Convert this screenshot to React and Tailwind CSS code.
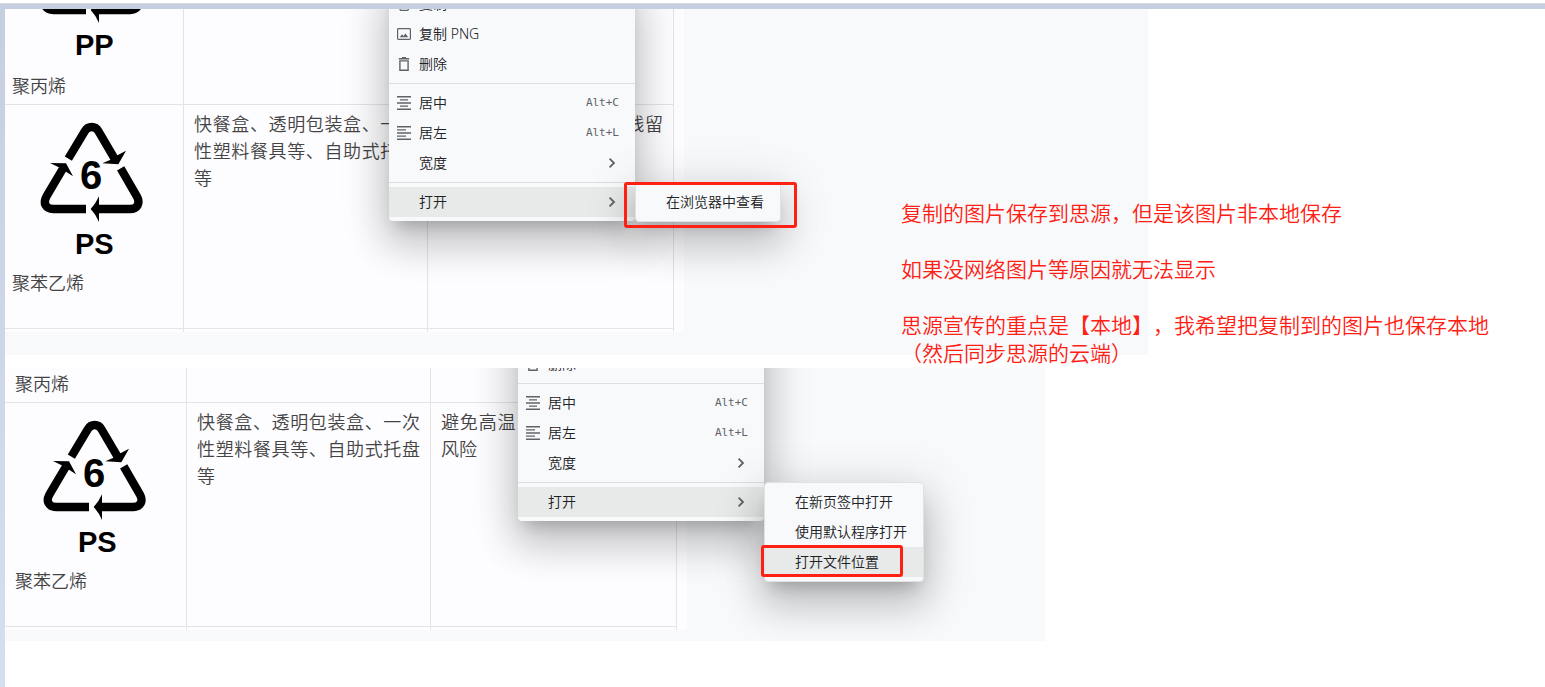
import React from 'react';
import { clsx } from 'clsx';

const icons = {
    image: (
        <svg viewBox="0 0 14 14" className="w-3.5 h-3.5" fill="none" stroke="currentColor">
            <rect x="0.6" y="1.6" width="12.8" height="10.8" rx="0.8" strokeWidth="1.2" />
            <path d="M2.8 10.2 5 7.2l1.5 1.9 2-2.7 2.7 3.8z" fill="currentColor" stroke="none" />
        </svg>
    ),
    trash: (
        <svg viewBox="0 0 14 14" className="w-3.5 h-3.5" fill="none" stroke="currentColor" strokeWidth="1.4">
            <path d="M1.8 1.7h10.4M5 .7h4M2.9 3.9h8.2v9.4H2.9z" />
        </svg>
    ),
    copy: (
        <svg viewBox="0 0 14 14" className="w-3.5 h-3.5" fill="none" stroke="currentColor" strokeWidth="1.3">
            <rect x="3" y="3.5" width="8.4" height="9.8" rx="1" />
            <path d="M1 10.5V.8h8" />
        </svg>
    ),
    center: (
        <svg viewBox="0 0 14 14" className="w-3.5 h-3.5" fill="none" stroke="currentColor" strokeWidth="1.4">
            <path d="M0 .7h14M3 3.9h8M0 7h14M3 10.1h8M0 13.3h14" />
        </svg>
    ),
    left: (
        <svg viewBox="0 0 14 14" className="w-3.5 h-3.5" fill="none" stroke="currentColor" strokeWidth="1.4">
            <path d="M0 .7h14M0 3.9h9M0 7h14M0 10.1h9M0 13.3h14" />
        </svg>
    ),
};

const Chevron = () => (
    <svg viewBox="0 0 14 14" className="w-3.5 h-3.5" fill="none" stroke="currentColor" strokeWidth="1.8">
        <path d="M4.6 2.6 9 7l-4.4 4.4" />
    </svg>
);

const MenuItem = ({ icon, label, shortcut, submenu, active }) => (
    <li>
        <button
            className={clsx(
                'flex w-full h-[30px] items-center gap-2 pl-2 pr-4 text-sm font-[350] text-[#202124] whitespace-nowrap',
                active && 'bg-[#e8eae9]'
            )}
        >
            <span className="w-3.5 shrink-0 text-[#5f6368]">{icons[icon]}</span>
            <span>{label}</span>
            {shortcut && (
                <span className="ml-auto font-['DejaVu_Sans_Mono',monospace] text-[11px] text-[#5f6368]">{shortcut}</span>
            )}
            {submenu && (
                <span className="ml-auto text-[#5f6368]">
                    <Chevron />
                </span>
            )}
        </button>
    </li>
);

const Separator = () => <li className="my-1 h-px bg-[#dcdee0]" />;

const Menu = ({ className, children }) => (
    <ul
        className={clsx(
            'absolute rounded bg-[#f8f9fb] py-1 shadow-[0_11px_15px_-7px_rgba(0,0,0,0.2),0_24px_38px_3px_rgba(0,0,0,0.14),0_9px_46px_8px_rgba(0,0,0,0.12)]',
            className
        )}
    >
        {children}
    </ul>
);

const ImageMenu = ({ className }) => (
    <Menu className={clsx('w-[246px]', className)}>
        <MenuItem icon="copy" label="复制" />
        <MenuItem icon="image" label="复制 PNG" />
        <MenuItem icon="trash" label="删除" />
        <Separator />
        <MenuItem icon="center" label="居中" shortcut="Alt+C" />
        <MenuItem icon="left" label="居左" shortcut="Alt+L" />
        <MenuItem label="宽度" submenu />
        <Separator />
        <MenuItem label="打开" submenu active />
    </Menu>
);

const RecycleMark = ({ number, code, className }) => (
    <svg viewBox="36 33 480 477" className={clsx('block w-40 h-[159px]', className)} fill="#000">
        <g fill="none" stroke="#000" strokeWidth="25">
            <path d="M205 176 255 93C264 77 286 77 295 93L345 178" />
            <path d="M362 205 411 290C422 310 412 327 390 327H293" />
            <path d="M258 327H160C137 327 128 310 139 290L188 207" />
        </g>
        <path d="M307 190 355 193 378 152 348 168 330 180Z" />
        <path d="M272 327Q288 310 297 289V366Q288 344 272 327Z" />
        <path d="M150 189 198 190 219 229 198 215 176 202Z" />
        <text x="273" y="268" fontSize="120" fontWeight="700" textAnchor="middle" fontFamily="Liberation Sans, sans-serif">{number}</text>
        <text x="283" y="463" fontSize="87" fontWeight="700" textAnchor="middle" fontFamily="Liberation Sans, sans-serif">{code}</text>
    </svg>
);

const Cell = ({ className, children }) => (
    <td className={clsx('border-r border-b border-[#e4e3e6] align-top pt-1.5 px-2.5 text-justify', className)}>{children}</td>
);

const PlasticTable = ({ shifted }) => (
    <div className={clsx('shrink-0 bg-[#fdfcfe]', shifted ? 'w-[682px]' : 'w-[679px]')}>
        <table className="table-fixed border-separate border-spacing-0 w-[669px] text-lg/[27px] font-[350] text-[#444]">
            <colgroup>
                <col className={shifted ? 'w-[182px]' : 'w-[179px]'} />
                <col className="w-[244px]" />
                <col className="w-[246px]" />
            </colgroup>
            <tbody>
                <tr className="h-[199px]">
                    <Cell className={clsx('pb-1', shifted ? 'pl-2.5' : 'pl-[7px]')}>
                        <RecycleMark number="5" code="PP" className="mb-0.5" />
                        聚丙烯
                    </Cell>
                    <Cell />
                    <Cell />
                </tr>
                <tr className="h-56">
                    <Cell className={shifted ? 'pl-2.5' : 'pl-[7px]'}>
                        <RecycleMark number="6" code="PS" />
                        聚苯乙烯
                    </Cell>
                    <Cell>快餐盒、透明包装盒、一次性塑料餐具等、自助式托盘等</Cell>
                    <Cell>避免高温（毒性物质）残留风险</Cell>
                </tr>
                <tr className="h-[3px]">
                    <td className="border-r border-[#e4e3e6]" />
                    <td className="border-r border-[#e4e3e6]" />
                    <td className="border-r border-[#e4e3e6]" />
                </tr>
            </tbody>
        </table>
    </div>
);

const Panel = ({ className, children }) => (
    <section className={clsx('relative flex w-full flex-col justify-end overflow-hidden bg-[#f8f9fb]', className)}>
        {children}
    </section>
);

export default function App() {
    return (
        <div className="flex min-h-screen flex-col bg-white pt-[3px] font-['Noto_Sans','Noto_Sans_CJK_SC',sans-serif] [text-spacing-trim:space-all]">
            <div className="h-1.5 border-t border-[#d5d9e0] bg-[#c6cfe0]" />
            <div className="flex flex-1">
                <div className="w-[5px] shrink-0 bg-linear-to-b from-[#c6cfe0] to-[#d5dfef]" />
                <main className="relative flex-1">
                    <Panel className="h-[346px] max-w-[1143px] pb-[23px]">
                        <PlasticTable />
                        <ImageMenu className="left-96 bottom-[134px]" />
                        <Menu className="left-[630px] bottom-[133px] border border-[#dfe1e3]">
                            <MenuItem label="在浏览器中查看" />
                        </Menu>
                        <div className="absolute left-[619px] top-[173px] h-[46px] w-[173px] rounded-[3px] border-3 border-[#ff2014]" />
                    </Panel>

                    <Panel className="mt-[13px] h-[273px] max-w-[1040px] pb-[11px]">
                        <PlasticTable shifted />
                        <ImageMenu className="left-[513px] bottom-[120px]" />
                        <Menu className="left-[759px] bottom-[59px] border border-[#dfe1e3]">
                            <MenuItem label="在新页签中打开" />
                            <MenuItem label="使用默认程序打开" />
                            <MenuItem label="打开文件位置" active />
                        </Menu>
                        <div className="absolute left-[756px] top-[177px] h-8 w-[142px] rounded-[3px] border-3 border-[#ff2014]" />
                    </Panel>

                    {/* Annotation text over both panels */}
                    <div className="absolute left-[896px] top-[190px] space-y-7 whitespace-nowrap text-[21px]/[28px] font-[350] text-[#ff2014]">
                        <p>复制的图片保存到思源，但是该图片非本地保存</p>
                        <p>如果没网络图片等原因就无法显示</p>
                        <p>
                            思源宣传的重点是【本地】，我希望把复制到的图片也保存本地
                            <br />
                            （然后同步思源的云端）
                        </p>
                    </div>
                </main>
            </div>
        </div>
    );
}
